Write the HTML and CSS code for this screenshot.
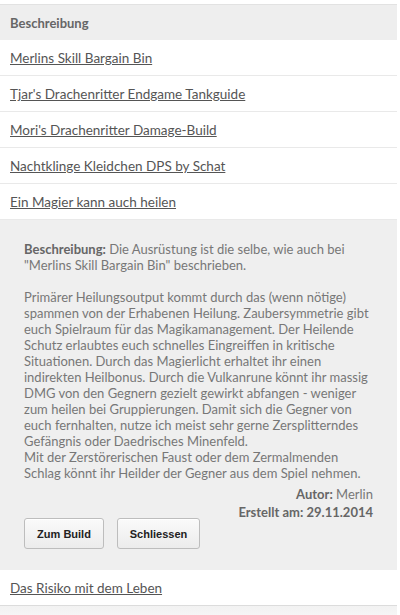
FILE: index.html
```html
<!DOCTYPE html>
<html lang="de">
<head>
<meta charset="utf-8">
<link rel="stylesheet" href="styles.css">
</head>
<body>
<div class="list">
  <div class="head">Beschreibung</div>
  <div class="row"><a href="#">Merlins Skill Bargain Bin</a></div>
  <div class="row"><a href="#">Tjar's Drachenritter Endgame Tankguide</a></div>
  <div class="row"><a href="#">Mori's Drachenritter Damage-Build</a></div>
  <div class="row"><a href="#">Nachtklinge Kleidchen DPS by Schat</a></div>
  <div class="row"><a href="#">Ein Magier kann auch heilen</a></div>
  <div class="detail">
    <p><b>Beschreibung:</b> Die Ausrüstung ist die selbe, wie auch bei "Merlins Skill Bargain Bin" beschrieben.</p>
    <p>Primärer Heilungsoutput kommt durch das (wenn nötige) spammen von der Erhabenen Heilung. Zaubersymmetrie gibt euch Spielraum für das Magikamanagement. Der Heilende Schutz erlaubtes euch schnelles Eingreiffen in kritische Situationen. Durch das Magierlicht erhaltet ihr einen indirekten Heilbonus. Durch die Vulkanrune könnt ihr massig DMG von den Gegnern gezielt gewirkt abfangen - weniger zum heilen bei Gruppierungen. Damit sich die Gegner von euch fernhalten, nutze ich meist sehr gerne Zersplitterndes Gefängnis oder Daedrisches Minenfeld.<br>Mit der Zerstörerischen Faust oder dem Zermalmenden Schlag könnt ihr Heilder der Gegner aus dem Spiel nehmen.</p>
    <div class="meta"><b>Autor:</b> Merlin<br><b>Erstellt am: 29.11.2014</b></div>
    <div class="buttons">
      <button class="btn">Zum Build</button>
      <button class="btn">Schliessen</button>
    </div>
  </div>
  <div class="row last"><a href="#">Das Risiko mit dem Leben</a></div>
  <div class="foot"></div>
</div>
</body>
</html>
```
FILE: styles.css
```css
html, body {
  margin: 0;
  padding: 0;
  background: #fff;
}
body {
  font-family: Lato, "Liberation Sans", sans-serif;
  font-size: 13px;
  color: #777;
}
.list {
  width: 397px;
  padding-top: 4px;
}
.head {
  height: 33px;
  line-height: 33px;
  padding-top: 2px;
  background: #eeeeee;
  border-top: 1px solid #e2e2e2;
  padding-left: 10px;
  font-weight: bold;
  color: #666;
}
.row {
  height: 33px;
  line-height: 33px;
  padding-top: 2px;
  padding-left: 10px;
  border-bottom: 1px solid #e9e9e9;
  background: #fff;
}
.row a {
  color: #555;
  font-size: 13.5px;
  text-decoration: underline;
}
.detail {
  background: #efefef;
  padding: 21px 24px 21px 24px;
  line-height: 16px;
  color: #777;
}
.detail p {
  margin: 0 0 16px 0;
}
.detail b { color: #666; }
.meta {
  text-align: right;
  line-height: 18px;
  margin-top: -12px;
}
.buttons {
  display: flex;
  gap: 13px;
  margin-top: -3px;
}
.btn {
  font-family: "Liberation Sans", Arial, sans-serif;
  font-weight: bold;
  font-size: 11px;
  color: #222;
  height: 31px;
  padding: 0 10px;
  border: 1px solid #bdbdbd;
  border-radius: 3px;
  background: linear-gradient(#fafafa, #ececec);
  box-shadow: 0 1px 0 #fff inset;
}
.btn:first-child { width: 80px; }
.btn:last-child { width: 83px; }
.row.last {
  border-bottom: 1px solid #dcdcdc;
}
.foot {
  height: 20px;
  background: linear-gradient(#f2f2f2, #fafafa);
}
```
